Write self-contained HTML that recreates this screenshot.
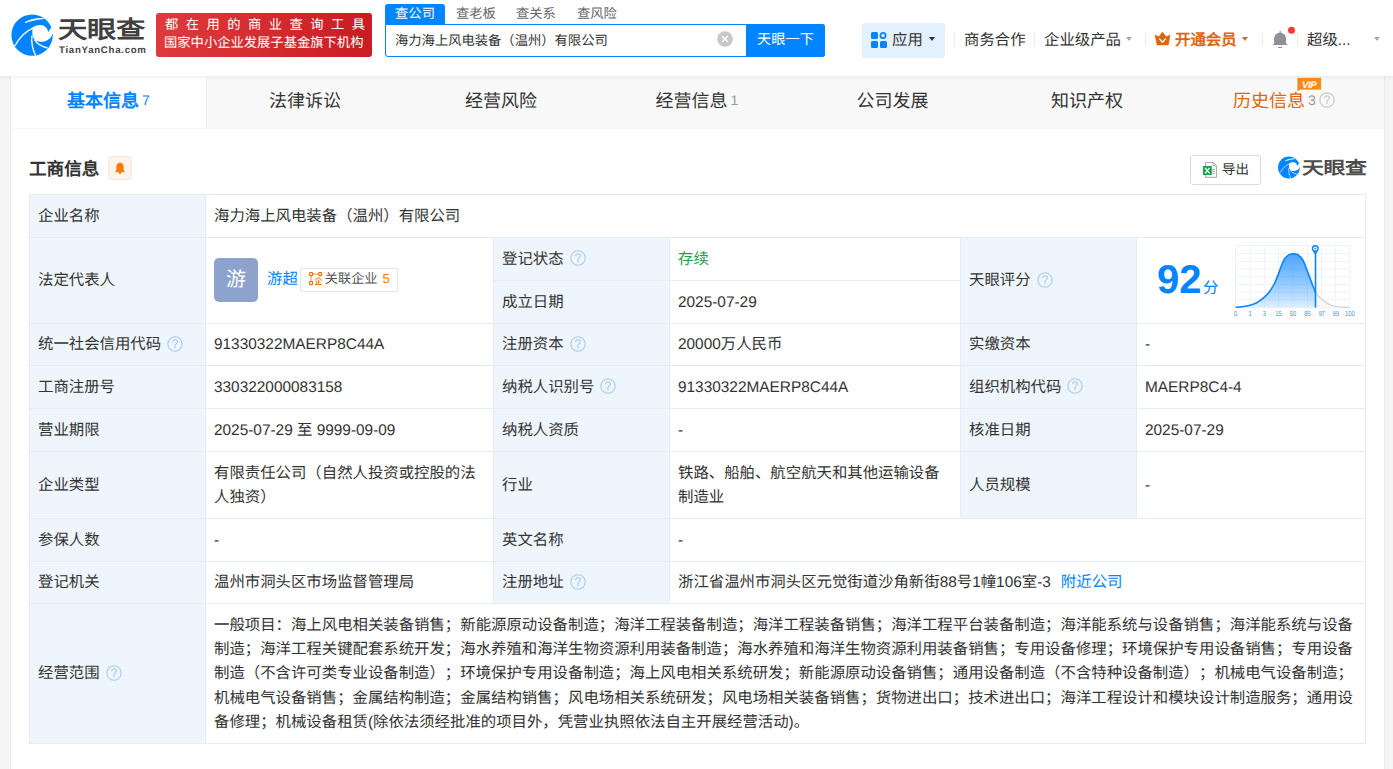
<!DOCTYPE html><html lang="zh-CN"><head><meta charset="utf-8"><style>
*{margin:0;padding:0;box-sizing:border-box}
html,body{width:1393px;height:769px;overflow:hidden;text-rendering:geometricPrecision;text-spacing-trim:space-all;background:#f5f5f5;font-family:"Liberation Sans",sans-serif;color:#333}
.a{position:absolute}
.hdr{position:absolute;left:0;top:0;width:1393px;height:76px;background:#fff;box-shadow:0 1px 4px rgba(0,0,0,.08);z-index:5}
.card{position:absolute;left:10px;top:76px;width:1375px;height:700px;background:#fff;border-left:1px solid #ececec;border-right:1px solid #ececec}
.cell{position:absolute;display:flex;align-items:center;padding:3px 9px 0 9px;font-size:15.4px;line-height:24.25px;color:#333;white-space:nowrap}
.lbl{background:#eef5fc}
.hl{position:absolute;height:1px;background:#e4ecf4}
.vl{position:absolute;width:1px;background:#e4ecf4}
.q{display:inline-block;width:16px;height:16px;margin-left:6px;vertical-align:middle;position:relative;top:-2px}
.tab{position:absolute;top:74px;height:52px;display:flex;align-items:center;justify-content:center;font-size:18px;color:#333}
.nav{position:absolute;font-size:15.4px;color:#333;line-height:20px;margin-top:2px}
.dv{position:absolute;width:1px;height:13px;background:#e8ebef;top:33px}
.caret{position:absolute;width:0;height:0;border-left:3.5px solid transparent;border-right:3.5px solid transparent;border-top:4px solid #999}
</style></head><body><div class="hdr">
<svg class="a" style="left:0;top:0" width="60" height="62" viewBox="0 0 60 62">
<circle cx="32.1" cy="35.1" r="20.7" fill="#0084ff"/>
<path d="M32.6,27.6 C35,25.6 38,24.9 41,25.1 C44.5,25.4 47.4,27.6 48.2,32.2 C49,30.2 50.5,28.5 52,27.2 L56,27 L56,34 L52.8,33.6 C51.5,37.5 48.5,40.5 44.5,41.4 C41,42 37.5,41.6 35.2,40.2 C33.6,38.6 32.6,36.5 32.4,34.5 C32.3,31.8 32.3,29.5 32.6,27.6 Z" fill="#fff"/>
<path d="M25,22.6 C30,19.6 37,18 43.4,18.6 C37.5,19.2 31,20.6 25,22.6 Z" fill="#fff" stroke="#fff" stroke-width="0.9"/>
<path d="M14.8,46 C19,38 25.5,31 33.6,27.8" fill="none" stroke="#fff" stroke-width="1.3"/>
<path d="M32,35.5 C31.2,42 32.4,49 35.6,55.5" fill="none" stroke="#fff" stroke-width="1.3"/>
<path d="M34.6,39.8 C37,43.5 41.5,46.5 47.5,48" fill="none" stroke="#fff" stroke-width="1.3"/>
</svg>

<div class="a" style="left:58px;top:11px;font-size:29px;line-height:34px;font-weight:bold;color:#404040;letter-spacing:-0.3px;transform:scale(1.01,0.83);transform-origin:left bottom">天眼查</div>
<div class="a" style="left:59px;top:45.5px;font-size:9.6px;line-height:10px;font-weight:bold;color:#444;letter-spacing:0.75px">TianYanCha.com</div>
<div class="a" style="left:156px;top:13px;width:216px;height:44px;border-radius:3px;background:linear-gradient(90deg,#e03a3c,#c81d22)"></div>
<div class="a" style="left:165px;top:16px;width:215px;font-size:13.3px;line-height:17px;color:#fff;letter-spacing:7.45px;white-space:nowrap">都在用的商业查询工具</div>
<div class="a" style="left:164px;top:34px;width:210px;font-size:13.3px;line-height:17px;color:#fff;white-space:nowrap">国家中小企业发展子基金旗下机构</div>
<div class="a" style="left:385px;top:4px;width:60px;height:20px;background:#0084ff;border-radius:3px 3px 0 0;color:#fff;font-size:13.3px;line-height:20px;text-align:center">查公司</div>
<div class="a" style="left:456px;top:4px;font-size:13.3px;line-height:20px;color:#666">查老板</div>
<div class="a" style="left:516px;top:4px;font-size:13.3px;line-height:20px;color:#666">查关系</div>
<div class="a" style="left:577px;top:4px;font-size:13.3px;line-height:20px;color:#666">查风险</div>
<div class="a" style="left:385px;top:24px;width:440px;height:33px;border:1px solid #0084ff;border-radius:0 3px 3px 3px;background:#fff"></div>
<div class="a" style="left:395px;top:31px;font-size:13.3px;line-height:20px;color:#333;white-space:nowrap">海力海上风电装备（温州）有限公司</div>
<svg class="a" style="left:717px;top:31px" width="16" height="16" viewBox="0 0 16 16"><circle cx="8" cy="8" r="7.8" fill="#c8c8c8"/><path d="M5 5 L11 11 M11 5 L5 11" stroke="#fff" stroke-width="1.4"/></svg>
<div class="a" style="left:746px;top:24px;width:79px;height:33px;background:#0084ff;border-radius:0 3px 3px 0;color:#fff;font-size:14.2px;line-height:32px;text-align:center">天眼一下</div>
<div class="a" style="left:862px;top:23px;width:83px;height:35px;background:#e3f0fd;border-radius:3px"></div>
<svg class="a" style="left:871px;top:32px" width="16" height="16" viewBox="0 0 16 16"><rect x="0" y="0" width="7" height="7" rx="1.5" fill="#0084ff"/><circle cx="12" cy="3.5" r="2.6" fill="none" stroke="#0084ff" stroke-width="1.8"/><rect x="0" y="9" width="7" height="7" rx="1.5" fill="#0084ff"/><rect x="9" y="9" width="7" height="7" rx="1.5" fill="#0084ff"/></svg>
<div class="nav" style="left:892px;top:29px">应用</div>
<div class="caret" style="left:929px;top:37px;border-top-color:#333"></div>
<div class="dv" style="left:954px"></div>
<div class="nav" style="left:964px;top:29px">商务合作</div>
<div class="dv" style="left:1034px"></div>
<div class="nav" style="left:1044px;top:29px">企业级产品</div>
<div class="caret" style="left:1126px;top:37px;border-top-color:#aaa"></div>
<div class="dv" style="left:1145px"></div>
<svg class="a" style="left:1150px;top:28px" width="24" height="20" viewBox="1150 28 24 20"><path d="M1155.1,35.1 L1158.8,36.8 L1162.5,32.1 L1166.2,36.8 L1170,35.1 L1168.3,44.9 L1157.1,44.9 Z" fill="#db670c" stroke="#db670c" stroke-width="0.6" stroke-linejoin="round"/><path d="M1159.3,38.6 L1162.5,42.2 L1165.7,38.6" fill="none" stroke="#fff" stroke-width="1.3"/></svg>
<div class="nav" style="left:1175px;top:29px;color:#e0650e;font-weight:bold">开通会员</div>
<div class="caret" style="left:1242px;top:37px;border-top-color:#e0650e"></div>
<div class="dv" style="left:1262px"></div>
<svg class="a" style="left:1270px;top:24px" width="26" height="26" viewBox="1270 24 26 26"><rect x="1279.5" y="31" width="1.3" height="2.5" fill="#8e9196"/><path d="M1274.1,44 L1274.1,38.8 C1274.1,35 1276.7,32.8 1280.1,32.8 C1283.5,32.8 1286,35 1286,38.8 L1286,44 Z" fill="#8e9196"/><rect x="1272.9" y="43.9" width="14.5" height="1.1" rx="0.5" fill="#8e9196"/><rect x="1278" y="46.9" width="4.2" height="1" fill="#8e9196"/><circle cx="1291.5" cy="30.3" r="3.5" fill="#ff3b30"/></svg>
<div class="dv" style="left:1297px"></div>
<div class="nav" style="left:1307px;top:29px">超级...</div>
<div class="caret" style="left:1374px;top:37px;border-top-color:#aaa"></div>
</div>
<div class="card"></div>
<div class="a" style="left:206px;top:76px;width:1178px;height:52px;background:#f9f9f9;border-left:1px solid #f1f1f1"></div>
<div class="a" style="left:11px;top:128px;width:1373px;height:1px;background:#f6f6f6"></div>
<div class="tab" style="left:11px;width:195px;color:#0084ff;font-weight:bold">基本信息<span style="font-size:14px;color:#0084ff;margin-left:3px;font-weight:normal;position:relative;top:0px">7</span></div>
<div class="tab" style="left:207px;width:196px;">法律诉讼</div>
<div class="tab" style="left:404px;width:194px;">经营风险</div>
<div class="tab" style="left:599px;width:196px;">经营信息<span style="font-size:14px;color:#999;margin-left:3px;font-weight:normal;position:relative;top:0px">1</span></div>
<div class="tab" style="left:795px;width:195px;">公司发展</div>
<div class="tab" style="left:989px;width:196px;">知识产权</div>
<div class="tab" style="left:1185px;width:198px;color:#e0650e">历史信息<span style="font-size:14px;color:#999;margin-left:3px;font-weight:normal;position:relative;top:0px">3</span><svg class="q" viewBox="0 0 16 16" style="margin-left:3px;top:0"><circle cx="8" cy="8" r="7.2" fill="none" stroke="#c5cad1" stroke-width="1.3"/><path d="M5.6,6.2 C5.6,4.7 6.7,3.8 8,3.8 C9.4,3.8 10.5,4.7 10.5,6.1 C10.5,7.6 8,7.8 8,9.6 L8,11.8" fill="none" stroke="#c5cad1" stroke-width="1.3"/></svg></div>
<svg class="a" style="left:1294px;top:75px" width="30" height="19" viewBox="1294 75 30 19"><defs><linearGradient id="vg" x1="0" y1="0" x2="1" y2="0"><stop offset="0" stop-color="#f28a1d"/><stop offset="1" stop-color="#ff8a14"/></linearGradient></defs><path d="M1297.5,77.5 H1320.5 Q1321.5,77.5 1321.5,78.5 V89 Q1321.5,90 1320.5,90 H1300.5 L1297,91.8 V78.5 Q1297,77.5 1297.5,77.5 Z" fill="url(#vg)" stroke="#fff" stroke-width="0.7"/><text x="1309.2" y="87.6" text-anchor="middle" font-family="Liberation Sans" font-weight="bold" font-style="italic" font-size="9.6" fill="#fff" letter-spacing="-0.3">VIP</text></svg>
<div class="a" style="left:29px;top:156.5px;font-size:17.6px;line-height:24px;font-weight:bold;color:#333">工商信息</div>
<div class="a" style="left:108px;top:156px;width:24px;height:24px;background:#fff4ec;border:1px solid #fde3d0;border-radius:3px"></div>
<svg class="a" style="left:114px;top:161.5px" width="12" height="12.5" viewBox="0 0 13 13"><path d="M6.5 0.5 C3.8 0.5 2.5 2.8 2.5 5.2 L2.5 9 L1 10.8 L12 10.8 L10.5 9 L10.5 5.2 C10.5 2.8 9.2 0.5 6.5 0.5Z" fill="#ff7a00"/><circle cx="6.5" cy="11.7" r="1.2" fill="#ff7a00"/></svg>
<div class="a" style="left:1190px;top:155px;width:71px;height:30px;border:1px solid #dcdcdc;border-radius:3px;background:#fff"></div>
<svg class="a" style="left:1200px;top:159px" width="20" height="22" viewBox="1200 159 20 22"><path d="M1205.6,162.4 H1213.3 L1216.4,165.5 V177.3 H1205.6 Z" fill="#fff" stroke="#8f9399" stroke-width="0.85"/><path d="M1213.1,162.6 V165.7 H1216.2" fill="none" stroke="#8f9399" stroke-width="0.8"/><path d="M1212.2,169.5 H1215 M1212.2,171.5 H1215 M1212.2,173.5 H1215" stroke="#8f9399" stroke-width="0.75"/><rect x="1203" y="166" width="8.8" height="9" fill="#17a34a"/><path d="M1205,167.8 L1209.6,173.4 M1209.4,167.8 L1205.2,173.4" stroke="#fff" stroke-width="1.3"/></svg>
<div class="a" style="left:1222px;top:160px;font-size:13.5px;line-height:20px;color:#333">导出</div>
<svg class="a" style="left:1271.9px;top:149.4px" width="31.6" height="32.65" viewBox="0 0 60 62">
<circle cx="32.1" cy="35.1" r="20.7" fill="#0084ff"/>
<path d="M32.6,27.6 C35,25.6 38,24.9 41,25.1 C44.5,25.4 47.4,27.6 48.2,32.2 C49,30.2 50.5,28.5 52,27.2 L56,27 L56,34 L52.8,33.6 C51.5,37.5 48.5,40.5 44.5,41.4 C41,42 37.5,41.6 35.2,40.2 C33.6,38.6 32.6,36.5 32.4,34.5 C32.3,31.8 32.3,29.5 32.6,27.6 Z" fill="#fff"/>
<path d="M25,22.6 C30,19.6 37,18 43.4,18.6 C37.5,19.2 31,20.6 25,22.6 Z" fill="#fff" stroke="#fff" stroke-width="0.9"/>
<path d="M14.8,46 C19,38 25.5,31 33.6,27.8" fill="none" stroke="#fff" stroke-width="1.3"/>
<path d="M32,35.5 C31.2,42 32.4,49 35.6,55.5" fill="none" stroke="#fff" stroke-width="1.3"/>
<path d="M34.6,39.8 C37,43.5 41.5,46.5 47.5,48" fill="none" stroke="#fff" stroke-width="1.3"/>
</svg>

<div class="a" style="left:1302px;top:154px;font-size:21px;line-height:26px;font-weight:bold;color:#4d4d4d;letter-spacing:-0.3px;transform:scale(1.04,0.84);transform-origin:left bottom">天眼查</div>
<div class="cell lbl" style="left:29px;top:194px;width:176px;height:43px;">企业名称</div>
<div class="cell" style="left:205px;top:194px;width:1160px;height:43px;">海力海上风电装备（温州）有限公司</div>
<div class="cell lbl" style="left:29px;top:237px;width:176px;height:86px;">法定代表人</div>
<div class="cell" style="left:205px;top:237px;width:288px;height:86px;"><div style="width:44px;height:44px;border-radius:5px;background:#8da2cc;color:#fff;font-size:20px;line-height:44px;text-align:center;flex:none;margin-top:-3px">游</div><span style="color:#0084ff;margin-left:9px;margin-top:-2px">游超</span><span style="display:inline-flex;align-items:center;margin-left:2px;margin-top:-4px;height:24px;border:1px solid #e3e6ea;border-radius:2px;padding:0 7px 0 7px;font-size:13.2px;color:#555"><svg width="14" height="14" viewBox="0 0 14 14" style="margin-right:2px;margin-top:-2px;margin-left:1px"><rect x="0.6" y="0.6" width="3" height="3" rx="0.6" fill="none" stroke="#ff6a00" stroke-width="1.1"/><rect x="9.6" y="0.6" width="3" height="3" rx="0.6" fill="none" stroke="#ff6a00" stroke-width="1.1"/><rect x="0.6" y="9.6" width="3" height="3" rx="0.6" fill="none" stroke="#ff6a00" stroke-width="1.1"/><path d="M3.6,2.1 H9.6 M2.1,3.6 V9.6" stroke="#ff6a00" stroke-width="0.9" opacity="0.8"/><path d="M5.7,8.6 L9.4,5.4 L13.2,8.6 M6,12.5 H12.9 M7.4,9 V12.5 M9.4,7.6 V12.5 M9.4,10 H11.5" fill="none" stroke="#ff6a00" stroke-width="0.9"/></svg>关联企业<span style="color:#ff7a00;margin-left:5px">5</span></span></div>
<div class="cell lbl" style="left:493px;top:237px;width:176px;height:43px;">登记状态<svg class="q" viewBox="0 0 16 16"><circle cx="8" cy="8" r="7.2" fill="none" stroke="#a8cbee" stroke-width="1.1"/><path d="M5.6,6.2 C5.6,4.7 6.7,3.8 8,3.8 C9.4,3.8 10.5,4.7 10.5,6.1 C10.5,7.6 8,7.8 8,9.6 L8,12.2" fill="none" stroke="#a8cbee" stroke-width="1.1"/></svg></div>
<div class="cell" style="left:669px;top:237px;width:291px;height:43px;"><span style="color:#1aa04a">存续</span></div>
<div class="cell lbl" style="left:493px;top:280px;width:176px;height:43px;">成立日期</div>
<div class="cell" style="left:669px;top:280px;width:291px;height:43px;">2025-07-29</div>
<div class="cell lbl" style="left:960px;top:237px;width:176px;height:86px;">天眼评分<svg class="q" viewBox="0 0 16 16"><circle cx="8" cy="8" r="7.2" fill="none" stroke="#a8cbee" stroke-width="1.1"/><path d="M5.6,6.2 C5.6,4.7 6.7,3.8 8,3.8 C9.4,3.8 10.5,4.7 10.5,6.1 C10.5,7.6 8,7.8 8,9.6 L8,12.2" fill="none" stroke="#a8cbee" stroke-width="1.1"/></svg></div>
<div class="cell" style="left:1136px;top:237px;width:229px;height:86px;"><span style="position:absolute;left:21px;top:15px;font-size:40px;line-height:56px;font-weight:bold;color:#0084ff">92</span><span style="position:absolute;left:67px;top:40px;font-size:15.5px;line-height:24px;color:#0084ff">分</span><svg style="position:absolute;left:94px;top:3px" width="130" height="82" viewBox="1230 240 130 82"><defs><linearGradient id="gf" x1="0" y1="0" x2="0" y2="1"><stop offset="0" stop-color="#3f9bff" stop-opacity="0.9"/><stop offset="1" stop-color="#0084ff" stop-opacity="0.12"/></linearGradient></defs><line x1="1235.5" y1="245.5" x2="1235.5" y2="307.3" stroke="#edf3fb" stroke-width="1"/><line x1="1250.1" y1="245.5" x2="1250.1" y2="307.3" stroke="#edf3fb" stroke-width="1"/><line x1="1264.3" y1="245.5" x2="1264.3" y2="307.3" stroke="#edf3fb" stroke-width="1"/><line x1="1278.5" y1="245.5" x2="1278.5" y2="307.3" stroke="#edf3fb" stroke-width="1"/><line x1="1292.9" y1="245.5" x2="1292.9" y2="307.3" stroke="#edf3fb" stroke-width="1"/><line x1="1307.5" y1="245.5" x2="1307.5" y2="307.3" stroke="#edf3fb" stroke-width="1"/><line x1="1321.6" y1="245.5" x2="1321.6" y2="307.3" stroke="#edf3fb" stroke-width="1"/><line x1="1335.7" y1="245.5" x2="1335.7" y2="307.3" stroke="#edf3fb" stroke-width="1"/><line x1="1349.8" y1="245.5" x2="1349.8" y2="307.3" stroke="#edf3fb" stroke-width="1"/><line x1="1235.5" y1="245.5" x2="1349.8" y2="245.5" stroke="#edf3fb" stroke-width="1"/><line x1="1235.5" y1="253.4" x2="1349.8" y2="253.4" stroke="#edf3fb" stroke-width="1"/><line x1="1235.5" y1="261.3" x2="1349.8" y2="261.3" stroke="#edf3fb" stroke-width="1"/><line x1="1235.5" y1="268.9" x2="1349.8" y2="268.9" stroke="#edf3fb" stroke-width="1"/><line x1="1235.5" y1="276.6" x2="1349.8" y2="276.6" stroke="#edf3fb" stroke-width="1"/><line x1="1235.5" y1="284.5" x2="1349.8" y2="284.5" stroke="#edf3fb" stroke-width="1"/><line x1="1235.5" y1="292.1" x2="1349.8" y2="292.1" stroke="#edf3fb" stroke-width="1"/><line x1="1235.5" y1="299.6" x2="1349.8" y2="299.6" stroke="#edf3fb" stroke-width="1"/><line x1="1235.5" y1="307.3" x2="1349.8" y2="307.3" stroke="#edf3fb" stroke-width="1"/><path d="M1315.50,292.20 C1316.20,293.07 1318.02,295.72 1319.70,297.40 C1321.38,299.08 1323.47,300.90 1325.60,302.30 C1327.73,303.70 1329.87,304.98 1332.50,305.80 C1335.13,306.62 1338.52,306.92 1341.40,307.20 C1344.28,307.48 1348.40,307.45 1349.80,307.50 L1349.8,307.5 L1315.5,307.5 Z" fill="#f7f8fa"/><path d="M1235.50,307.30 C1236.57,307.22 1239.47,307.13 1241.90,306.80 C1244.33,306.47 1247.63,305.97 1250.10,305.30 C1252.57,304.63 1254.37,304.12 1256.70,302.80 C1259.03,301.48 1261.95,299.30 1264.10,297.40 C1266.25,295.50 1267.87,293.72 1269.60,291.40 C1271.33,289.08 1273.02,286.47 1274.50,283.50 C1275.98,280.53 1277.35,276.57 1278.50,273.60 C1279.65,270.63 1280.42,268.08 1281.40,265.70 C1282.38,263.32 1283.23,261.07 1284.40,259.30 C1285.57,257.53 1286.98,256.00 1288.40,255.10 C1289.82,254.20 1291.40,253.98 1292.90,253.90 C1294.40,253.82 1296.07,254.02 1297.40,254.60 C1298.73,255.18 1299.83,256.20 1300.90,257.40 C1301.97,258.60 1302.82,259.75 1303.80,261.80 C1304.78,263.85 1305.80,267.07 1306.80,269.70 C1307.80,272.33 1308.82,274.97 1309.80,277.60 C1310.78,280.23 1311.75,283.07 1312.70,285.50 C1313.65,287.93 1315.03,291.08 1315.50,292.20 L1315.5,307.5 L1235.5,307.5 Z" fill="url(#gf)"/><path d="M1315.50,292.20 C1316.20,293.07 1318.02,295.72 1319.70,297.40 C1321.38,299.08 1323.47,300.90 1325.60,302.30 C1327.73,303.70 1329.87,304.98 1332.50,305.80 C1335.13,306.62 1338.52,306.92 1341.40,307.20 C1344.28,307.48 1348.40,307.45 1349.80,307.50" fill="none" stroke="#c9d3de" stroke-width="1.2"/><path d="M1235.50,307.30 C1236.57,307.22 1239.47,307.13 1241.90,306.80 C1244.33,306.47 1247.63,305.97 1250.10,305.30 C1252.57,304.63 1254.37,304.12 1256.70,302.80 C1259.03,301.48 1261.95,299.30 1264.10,297.40 C1266.25,295.50 1267.87,293.72 1269.60,291.40 C1271.33,289.08 1273.02,286.47 1274.50,283.50 C1275.98,280.53 1277.35,276.57 1278.50,273.60 C1279.65,270.63 1280.42,268.08 1281.40,265.70 C1282.38,263.32 1283.23,261.07 1284.40,259.30 C1285.57,257.53 1286.98,256.00 1288.40,255.10 C1289.82,254.20 1291.40,253.98 1292.90,253.90 C1294.40,253.82 1296.07,254.02 1297.40,254.60 C1298.73,255.18 1299.83,256.20 1300.90,257.40 C1301.97,258.60 1302.82,259.75 1303.80,261.80 C1304.78,263.85 1305.80,267.07 1306.80,269.70 C1307.80,272.33 1308.82,274.97 1309.80,277.60 C1310.78,280.23 1311.75,283.07 1312.70,285.50 C1313.65,287.93 1315.03,291.08 1315.50,292.20" fill="none" stroke="#0a84ff" stroke-width="1.6"/><line x1="1315.5" y1="250" x2="1315.5" y2="307.5" stroke="#0a84ff" stroke-width="1.6"/><path d="M1315.3,244.9 a3.6,3.6 0 0 1 3.6,3.6 c0,2.2 -2.2,4 -3.6,6.3 c-1.4,-2.3 -3.6,-4.1 -3.6,-6.3 a3.6,3.6 0 0 1 3.6,-3.6 Z" fill="#0a84ff"/><circle cx="1315.3" cy="248.5" r="2.1" fill="#fff"/><circle cx="1315.3" cy="248.5" r="0.9" fill="#0a84ff"/><text transform="translate(1235.5,315.6) scale(0.8,1)" text-anchor="middle" font-size="7.2" fill="#3f93ec" font-family="Liberation Sans">0</text><text transform="translate(1250.1,315.6) scale(0.8,1)" text-anchor="middle" font-size="7.2" fill="#3f93ec" font-family="Liberation Sans">1</text><text transform="translate(1264.3,315.6) scale(0.8,1)" text-anchor="middle" font-size="7.2" fill="#3f93ec" font-family="Liberation Sans">3</text><text transform="translate(1278.5,315.6) scale(0.8,1)" text-anchor="middle" font-size="7.2" fill="#3f93ec" font-family="Liberation Sans">15</text><text transform="translate(1292.9,315.6) scale(0.8,1)" text-anchor="middle" font-size="7.2" fill="#3f93ec" font-family="Liberation Sans">50</text><text transform="translate(1307.5,315.6) scale(0.8,1)" text-anchor="middle" font-size="7.2" fill="#3f93ec" font-family="Liberation Sans">85</text><text transform="translate(1321.6,315.6) scale(0.8,1)" text-anchor="middle" font-size="7.2" fill="#3f93ec" font-family="Liberation Sans">97</text><text transform="translate(1335.7,315.6) scale(0.8,1)" text-anchor="middle" font-size="7.2" fill="#3f93ec" font-family="Liberation Sans">99</text><text transform="translate(1349.8,315.6) scale(0.8,1)" text-anchor="middle" font-size="7.2" fill="#3f93ec" font-family="Liberation Sans">100</text></svg></div>
<div class="cell lbl" style="left:29px;top:323px;width:176px;height:42px;">统一社会信用代码<svg class="q" viewBox="0 0 16 16"><circle cx="8" cy="8" r="7.2" fill="none" stroke="#a8cbee" stroke-width="1.1"/><path d="M5.6,6.2 C5.6,4.7 6.7,3.8 8,3.8 C9.4,3.8 10.5,4.7 10.5,6.1 C10.5,7.6 8,7.8 8,9.6 L8,12.2" fill="none" stroke="#a8cbee" stroke-width="1.1"/></svg></div>
<div class="cell" style="left:205px;top:323px;width:288px;height:42px;"><div>91330322MAERP8C44A</div></div>
<div class="cell lbl" style="left:493px;top:323px;width:176px;height:42px;">注册资本<svg class="q" viewBox="0 0 16 16"><circle cx="8" cy="8" r="7.2" fill="none" stroke="#a8cbee" stroke-width="1.1"/><path d="M5.6,6.2 C5.6,4.7 6.7,3.8 8,3.8 C9.4,3.8 10.5,4.7 10.5,6.1 C10.5,7.6 8,7.8 8,9.6 L8,12.2" fill="none" stroke="#a8cbee" stroke-width="1.1"/></svg></div>
<div class="cell" style="left:669px;top:323px;width:291px;height:42px;"><div>20000万人民币</div></div>
<div class="cell lbl" style="left:960px;top:323px;width:176px;height:42px;">实缴资本</div>
<div class="cell" style="left:1136px;top:323px;width:229px;height:42px;">-</div>
<div class="cell lbl" style="left:29px;top:365px;width:176px;height:43px;">工商注册号</div>
<div class="cell" style="left:205px;top:365px;width:288px;height:43px;"><div>330322000083158</div></div>
<div class="cell lbl" style="left:493px;top:365px;width:176px;height:43px;">纳税人识别号<svg class="q" viewBox="0 0 16 16"><circle cx="8" cy="8" r="7.2" fill="none" stroke="#a8cbee" stroke-width="1.1"/><path d="M5.6,6.2 C5.6,4.7 6.7,3.8 8,3.8 C9.4,3.8 10.5,4.7 10.5,6.1 C10.5,7.6 8,7.8 8,9.6 L8,12.2" fill="none" stroke="#a8cbee" stroke-width="1.1"/></svg></div>
<div class="cell" style="left:669px;top:365px;width:291px;height:43px;"><div>91330322MAERP8C44A</div></div>
<div class="cell lbl" style="left:960px;top:365px;width:176px;height:43px;">组织机构代码<svg class="q" viewBox="0 0 16 16"><circle cx="8" cy="8" r="7.2" fill="none" stroke="#a8cbee" stroke-width="1.1"/><path d="M5.6,6.2 C5.6,4.7 6.7,3.8 8,3.8 C9.4,3.8 10.5,4.7 10.5,6.1 C10.5,7.6 8,7.8 8,9.6 L8,12.2" fill="none" stroke="#a8cbee" stroke-width="1.1"/></svg></div>
<div class="cell" style="left:1136px;top:365px;width:229px;height:43px;">MAERP8C4-4</div>
<div class="cell lbl" style="left:29px;top:408px;width:176px;height:43px;">营业期限</div>
<div class="cell" style="left:205px;top:408px;width:288px;height:43px;"><div>2025-07-29 至 9999-09-09</div></div>
<div class="cell lbl" style="left:493px;top:408px;width:176px;height:43px;">纳税人资质</div>
<div class="cell" style="left:669px;top:408px;width:291px;height:43px;"><div>-</div></div>
<div class="cell lbl" style="left:960px;top:408px;width:176px;height:43px;">核准日期</div>
<div class="cell" style="left:1136px;top:408px;width:229px;height:43px;">2025-07-29</div>
<div class="cell lbl" style="left:29px;top:451px;width:176px;height:67px;">企业类型</div>
<div class="cell" style="left:205px;top:451px;width:288px;height:67px;"><div>有限责任公司（自然人投资或控股的法<br>人独资）</div></div>
<div class="cell lbl" style="left:493px;top:451px;width:176px;height:67px;">行业</div>
<div class="cell" style="left:669px;top:451px;width:291px;height:67px;"><div>铁路、船舶、航空航天和其他运输设备<br>制造业</div></div>
<div class="cell lbl" style="left:960px;top:451px;width:176px;height:67px;">人员规模</div>
<div class="cell" style="left:1136px;top:451px;width:229px;height:67px;">-</div>
<div class="cell lbl" style="left:29px;top:518px;width:176px;height:43px;">参保人数</div>
<div class="cell" style="left:205px;top:518px;width:288px;height:43px;">-</div>
<div class="cell lbl" style="left:493px;top:518px;width:176px;height:43px;">英文名称</div>
<div class="cell" style="left:669px;top:518px;width:696px;height:43px;">-</div>
<div class="cell lbl" style="left:29px;top:561px;width:176px;height:42px;">登记机关</div>
<div class="cell" style="left:205px;top:561px;width:288px;height:42px;">温州市洞头区市场监督管理局</div>
<div class="cell lbl" style="left:493px;top:561px;width:176px;height:42px;">注册地址<svg class="q" viewBox="0 0 16 16"><circle cx="8" cy="8" r="7.2" fill="none" stroke="#a8cbee" stroke-width="1.1"/><path d="M5.6,6.2 C5.6,4.7 6.7,3.8 8,3.8 C9.4,3.8 10.5,4.7 10.5,6.1 C10.5,7.6 8,7.8 8,9.6 L8,12.2" fill="none" stroke="#a8cbee" stroke-width="1.1"/></svg></div>
<div class="cell" style="left:669px;top:561px;width:696px;height:42px;">浙江省温州市洞头区元觉街道沙角新街88号1幢106室-3<span style="color:#0084ff;margin-left:10px">附近公司</span></div>
<div class="cell lbl" style="left:29px;top:603px;width:176px;height:140px;">经营范围<svg class="q" viewBox="0 0 16 16"><circle cx="8" cy="8" r="7.2" fill="none" stroke="#a8cbee" stroke-width="1.1"/><path d="M5.6,6.2 C5.6,4.7 6.7,3.8 8,3.8 C9.4,3.8 10.5,4.7 10.5,6.1 C10.5,7.6 8,7.8 8,9.6 L8,12.2" fill="none" stroke="#a8cbee" stroke-width="1.1"/></svg></div>
<div class="cell" style="left:205px;top:603px;width:1160px;height:140px;"><div>一般项目：海上风电相关装备销售；新能源原动设备制造；海洋工程装备制造；海洋工程装备销售；海洋工程平台装备制造；海洋能系统与设备销售；海洋能系统与设备<br>制造；海洋工程关键配套系统开发；海水养殖和海洋生物资源利用装备制造；海水养殖和海洋生物资源利用装备销售；专用设备修理；环境保护专用设备销售；专用设备<br>制造（不含许可类专业设备制造）；环境保护专用设备制造；海上风电相关系统研发；新能源原动设备销售；通用设备制造（不含特种设备制造）；机械电气设备制造；<br>机械电气设备销售；金属结构制造；金属结构销售；风电场相关系统研发；风电场相关装备销售；货物进出口；技术进出口；海洋工程设计和模块设计制造服务；通用设<br>备修理；机械设备租赁(除依法须经批准的项目外，凭营业执照依法自主开展经营活动)。</div></div>
<div class="hl" style="left:29px;top:194px;width:1337px"></div>
<div class="hl" style="left:29px;top:237px;width:1337px"></div>
<div class="hl" style="left:29px;top:323px;width:1337px"></div>
<div class="hl" style="left:29px;top:365px;width:1337px"></div>
<div class="hl" style="left:29px;top:408px;width:1337px"></div>
<div class="hl" style="left:29px;top:451px;width:1337px"></div>
<div class="hl" style="left:29px;top:518px;width:1337px"></div>
<div class="hl" style="left:29px;top:561px;width:1337px"></div>
<div class="hl" style="left:29px;top:603px;width:1337px"></div>
<div class="hl" style="left:29px;top:743px;width:1337px"></div>
<div class="hl" style="left:493px;top:280px;width:468px"></div>
<div class="vl" style="left:29px;top:194px;height:550px"></div>
<div class="vl" style="left:1365px;top:194px;height:550px"></div>
<div class="vl" style="left:205px;top:194px;height:550px"></div>
<div class="vl" style="left:493px;top:237px;height:367px"></div>
<div class="vl" style="left:669px;top:237px;height:367px"></div>
<div class="vl" style="left:960px;top:237px;height:282px"></div>
<div class="vl" style="left:1136px;top:237px;height:282px"></div></body></html>
